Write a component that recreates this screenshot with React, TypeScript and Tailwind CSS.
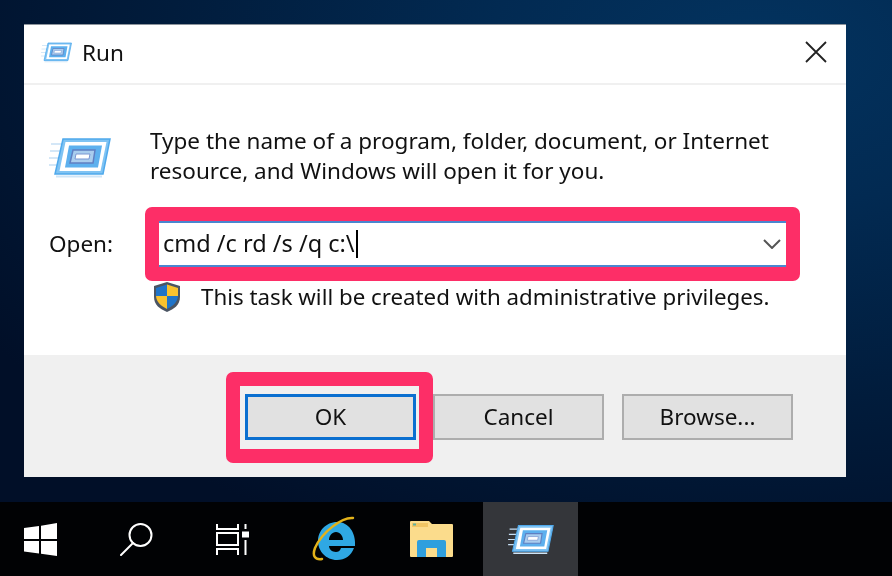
function RunIcon({ className }: { className?: string }) {
  return (
    <svg viewBox="0 0 62 42" className={className}>
      <g stroke="#c6e0f5" strokeWidth="1.500">
        <path d="M2 7h12M1 14h11M0 21h10M0 28h8" />
      </g>
      <path d="M14 2h47l-7 35H6z" fill="#7fc3f3" stroke="#4fa9ec" strokeWidth="1.500" />
      <path d="M16.500 5h41l-6 29H10.500z" fill="#ffffff" />
      <path d="M20 8.500h33l-4 22H16z" fill="#5db0ee" />
      <path d="M24 13h22l-2 13H21z" fill="#a9cdee" stroke="#5f7fc2" strokeWidth="1.500" />
      <path d="M27 17h14l-1 5H26z" fill="#ffffff" stroke="#7b97d2" strokeWidth="1" />
      <path d="M7 39.500h46" stroke="#cfe5f7" strokeWidth="2" />
    </svg>
  );
}

function Shield() {
  return (
    <svg viewBox="0 0 30 32" className="h-[32px] w-[30px] shrink-0">
      <path d="M15 1 28 5v11c0 8-6 12-13 15C8 28 2 24 2 16V5z" fill="#4b5563" />
      <path d="M15 3.500 26 7v8H15z" fill="#f9c22e" />
      <path d="M15 3.500 4 7v8h11z" fill="#1f74c9" />
      <path d="M15 15h11c-.5 6-5 10-11 13z" fill="#1f74c9" />
      <path d="M15 15H4c.5 6 5 10 11 13z" fill="#f9c22e" />
    </svg>
  );
}

function DialogButton({ label, isDefault }: { label: string; isDefault?: boolean }) {
  return (
    <div
      className={`flex h-[46px] w-[171px] items-center justify-center bg-[#e1e1e1] text-[22.500px] text-[#111] ${
        isDefault ? 'border-[3px] border-[#0b6fd0]' : 'border-2 border-[#adadad]'
      }`}
    >
      {label}
    </div>
  );
}

export default function App() {
  return (
    <div
      className="flex h-[576px] w-[892px] flex-col overflow-hidden bg-black blur-[0.4px]"
      style={{ fontFamily: '"Noto Sans", "Open Sans", sans-serif' }}
    >
      {/* Desktop */}
      <div className="h-[502px] bg-[radial-gradient(ellipse_at_85%_10%,#03335f_0%,#022a52_25%,#011c3c_55%,#010f28_85%)] px-6 pt-6">
        <div className="flex h-[453px] w-[822px] flex-col border-t border-[#8d949c] bg-white">
          {/* Title bar */}
          <div className="flex h-[60px] shrink-0 items-center border-b-2 border-[#f0f0f0] pl-[17px] pr-[8px]">
            <RunIcon className="mb-[3px] h-[21px] w-[31px]" />
            <span className="ml-[10px] mb-[2px] text-[22.500px] leading-none text-[#111]">Run</span>
            <svg viewBox="0 0 22 22" className="mb-[4px] ml-auto mr-[11px] h-[22px] w-[22px]" stroke="#222" strokeWidth="1.800" fill="none">
              <path d="M1 1l20 20M21 1 1 21" />
            </svg>
          </div>

          {/* Body */}
          <div className="min-h-0 flex-1 pl-[25px] pr-[12px]">
            <div className="mt-[41px] flex">
              <RunIcon className="mt-[11px] h-[42px] w-[62px] shrink-0" />
              <p className="ml-[39px] whitespace-nowrap text-[22.500px] leading-[30px] text-[#111]">
                Type the name of a program, folder, document, or Internet
                <br />
                resource, and Windows will open it for you.
              </p>
            </div>

            <div className="mt-[35px] flex items-center">
              <span className="text-[22.500px] leading-none text-[#111]">Open:</span>
              <div className="relative ml-[46px] flex h-[46px] w-[627px] items-center border-y-2 border-[#4a86d0] bg-white pl-[4px] pr-[4px]">
                <span className="text-[23.500px] leading-none text-[#111]">cmd /c rd /s /q c:\</span>
                <span className="ml-[1px] h-[28px] w-[2px] bg-black" />
                <svg viewBox="0 0 18 10" className="ml-auto mr-[1px] h-[10px] w-[18px]" fill="none" stroke="#555" strokeWidth="2">
                  <path d="M1 1l8 8 8-8" />
                </svg>
                <div className="absolute -inset-x-[14px] -inset-y-[16px] rounded-[7px] border-[14px] border-[#fd2e67]" />
              </div>
            </div>

            <div className="ml-[103px] mt-[14px] flex items-center">
              <Shield />
              <span className="ml-[19px] whitespace-nowrap text-[22.300px] leading-none text-[#111]">
                This task will be created with administrative privileges.
              </span>
            </div>
          </div>

          {/* Footer */}
          <div className="flex h-[122px] shrink-0 items-start gap-[18px] bg-[#f0f0f0] pl-[221px] pt-[39px]">
            <div className="relative mr-[-1px]">
              <DialogButton label="OK" isDefault />
              <div className="absolute -bottom-[23px] -left-[19px] -right-[17px] -top-[22px] rounded-[7px] border-[14px] border-[#fd2e67]" />
            </div>
            <DialogButton label="Cancel" />
            <DialogButton label="Browse..." />
          </div>
        </div>
      </div>

      {/* Taskbar */}
      <div className="flex h-[74px] items-center bg-[#010204]">
        <svg viewBox="0 0 33 33" className="ml-6 h-[33px] w-[33px]" fill="#fff">
          <path d="M0 5 15 3v13H0zM17 2.700 33 0v16H17zM0 18h15v12.500L0 28.500zM17 18h16v15l-16-2.300z" />
        </svg>
        <svg viewBox="0 0 33 33" className="ml-[63px] h-[33px] w-[33px]" fill="none" stroke="#fff" strokeWidth="2">
          <circle cx="20.500" cy="12" r="11" />
          <path d="M13 20 1 32" strokeLinecap="round" />
        </svg>
        <svg viewBox="0 0 33 31" className="ml-[63px] h-[31px] w-[33px]" fill="none" stroke="#fff" strokeWidth="2">
          <path d="M1 0v5h21V0M1 9h21v12H1zM1 31v-6h21v6M29.500 0v5M29.500 16v15" />
          <rect x="26" y="7.500" width="7" height="6" fill="#fff" stroke="none" />
        </svg>
        <svg viewBox="0 0 44 46" className="ml-[63px] h-[46px] w-[44px]" fill="none">
          <path
            d="M25 6C14 6 6 15 6 25s8 19 19 19c8 0 14-4 17-12H29c-1 3-3 4-5 4-4 0-7-3-7-6h26c1-13-6-24-18-24zm-8 18c0-4 3-8 7-8s7 4 7 8z"
            fill="#2fa8e4"
          />
          <path d="M41 2C30 1 10 16 3 32c-3 8 0 12 7 11" stroke="#e3b21a" strokeWidth="2.500" strokeLinecap="round" />
        </svg>
        <svg viewBox="0 0 43 36" className="ml-[54px] h-[36px] w-[43px]">
          <path d="M0 1q0-1 1-1h18l3 3h20q1 0 1 1v31q0 1-1 1H1q-1 0-1-1z" fill="#fbdc8c" />
          <path d="M2 2h16v4H2z" fill="#f0c564" />
          <path d="M3 2.500h3v2H3z" fill="#5fb0a0" />
          <path d="M7 36V21q0-2 2-2h25q2 0 2 2v15h-9v-9H16v9z" fill="#2f9fde" />
        </svg>
        <div className="ml-[30px] flex h-full w-[95px] items-center justify-center bg-[#34363a]">
          <RunIcon className="h-[31px] w-[46px]" />
        </div>
      </div>
    </div>
  );
}
